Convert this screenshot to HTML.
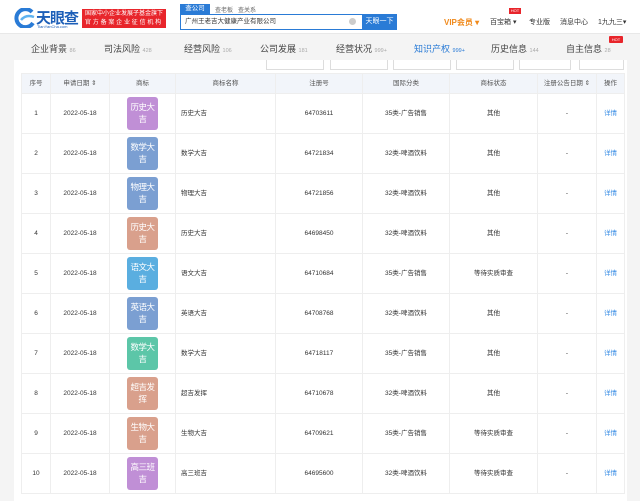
<!DOCTYPE html>
<html><head><meta charset="utf-8"><style>
*{margin:0;padding:0;box-sizing:border-box}
body{width:640px;height:501px;overflow:hidden;background:#f4f4f4;font-family:"Liberation Sans","Noto Sans CJK SC",sans-serif;font-size:7px;color:#333;position:relative}
.hdr{position:absolute;left:0;top:0;width:640px;height:34px;background:#fff;border-bottom:1px solid #e8e8e8}
.abs{position:absolute}
.nav{position:absolute;top:36px;left:0;width:640px;height:24px;font-size:9px;color:#444}
.nav span{position:absolute;top:6px;white-space:nowrap}
.nav i{font-style:normal;font-size:5.5px;color:#aaa}
.panel{position:absolute;left:14px;top:60px;width:613px;height:441px;background:#fff}
.dd{position:absolute;top:60px;height:10px;border:1px solid #ddd;border-top:none;background:#fff}
table{position:absolute;left:21px;top:73px;width:603px;border-collapse:collapse;table-layout:fixed}
td,th{border:1px solid #eee;text-align:center;font-weight:normal;font-size:6.5px;line-height:10px;color:#333;vertical-align:middle;white-space:nowrap;overflow:hidden;padding:0}
th{height:20px;background:#f2f5fa;color:#555}
td{height:40px}
.lg{display:block;margin:0 auto;width:31px;height:33px;border-radius:3px;color:#fff;font-size:8.5px;line-height:12px;padding-top:4px;letter-spacing:-0.5px;white-space:nowrap;overflow:hidden;text-align:center}
.l{text-align:left;padding-left:5px}
.bl{color:#3a8ee6}
</style></head><body>
<div class="hdr">
 <svg class="abs" style="left:14px;top:8px" width="22" height="20" viewBox="0 0 22 20"><path d="M18 4 A9 9 0 1 0 19 15" fill="none" stroke="#2a7bd6" stroke-width="4"/><path d="M7 12 Q12 6 20 9" fill="none" stroke="#5fb3f0" stroke-width="2.5"/></svg>
 <div class="abs" style="left:36px;top:7px;font-size:15px;font-weight:bold;color:#1d5fb8;letter-spacing:-1px">天眼查</div>
 <div class="abs" style="left:37px;top:24px;font-size:4px;color:#1d5fb8">TianYanCha.com</div>
 <div class="abs" style="left:82px;top:9px;width:84px;height:19px;background:#e8252b;color:#fff;font-size:6px;line-height:8.5px;text-align:center;padding-top:1px;white-space:nowrap;overflow:hidden">国家中小企业发展子基金旗下<br><span style="letter-spacing:1.8px">官方备案企业征信机构</span></div>
 <div class="abs" style="left:180px;top:4px;width:30px;height:10px;background:#2a7bd6;color:#fff;font-size:6.5px;text-align:center;line-height:10px">查公司</div>
 <div class="abs" style="left:215px;top:5px;font-size:6px;color:#666">查老板</div>
 <div class="abs" style="left:238px;top:5px;font-size:6px;color:#666">查关系</div>
 <div class="abs" style="left:180px;top:14px;width:183px;height:16px;border:1px solid #2a7bd6;background:#fff;font-size:6.5px;line-height:14px;padding-left:4px">广州王老吉大健康产业有限公司</div>
 <div class="abs" style="left:349px;top:18px;width:7px;height:7px;border-radius:50%;background:#ccc"></div>
 <div class="abs" style="left:362px;top:14px;width:35px;height:16px;background:#2a7bd6;color:#fff;font-size:7px;line-height:16px;text-align:center">天眼一下</div>
 <div class="abs" style="left:444px;top:17px;font-size:8px;font-weight:bold;color:#f08a1c">VIP会员 ▾</div>
 <div class="abs" style="left:490px;top:17px;font-size:7px;color:#333">百宝箱 ▾</div>
 <div class="abs" style="left:509px;top:8px;width:12px;height:6px;background:#e8252b;color:#fff;font-size:4px;text-align:center;line-height:6px">HOT</div>
 <div class="abs" style="left:529px;top:17px;font-size:7px">专业版</div>
 <div class="abs" style="left:560px;top:17px;font-size:7px">消息中心</div>
 <div class="abs" style="left:598px;top:17px;font-size:7px">1九九三▾</div>
</div>
<div class="nav">
 <span style="left:31px">企业背景 <i>86</i></span>
 <span style="left:104px">司法风险 <i>428</i></span>
 <span style="left:184px">经营风险 <i>106</i></span>
 <span style="left:260px">公司发展 <i>181</i></span>
 <span style="left:336px">经营状况 <i>999+</i></span>
 <span style="left:414px;color:#2a7bd6">知识产权 <i style="color:#2a7bd6">999+</i></span>
 <span style="left:491px">历史信息 <i>144</i></span>
 <span style="left:566px">自主信息 <i>28</i></span>
 <div class="abs" style="left:609px;top:0;width:14px;height:7px;background:#e8252b;color:#fff;font-size:4px;text-align:center;line-height:7px;border-radius:1px">HOT</div>
</div>
<div class="panel"></div>
<div class="dd" style="left:266px;width:58px"></div>
<div class="dd" style="left:330px;width:58px"></div>
<div class="dd" style="left:393px;width:58px"></div>
<div class="dd" style="left:456px;width:58px"></div>
<div class="dd" style="left:519px;width:52px"></div>
<div class="dd" style="left:579px;width:45px"></div>
<table>
<colgroup><col style="width:29px"><col style="width:59px"><col style="width:66px"><col style="width:100px"><col style="width:87px"><col style="width:87px"><col style="width:88px"><col style="width:59px"><col style="width:28px"></colgroup>
<tr><th>序号</th><th>申请日期 ⇕</th><th>商标</th><th>商标名称</th><th>注册号</th><th>国际分类</th><th>商标状态</th><th>注册公告日期 ⇕</th><th>操作</th></tr>
<tr><td>1</td><td>2022-05-18</td><td><span class="lg" style="background:#c08fd6">历史大<br>吉</span></td><td class="l">历史大吉</td><td>64703611</td><td>35类-广告销售</td><td>其他</td><td>-</td><td class="bl">详情</td></tr>
<tr><td>2</td><td>2022-05-18</td><td><span class="lg" style="background:#7b9fd2">数学大<br>吉</span></td><td class="l">数学大吉</td><td>64721834</td><td>32类-啤酒饮料</td><td>其他</td><td>-</td><td class="bl">详情</td></tr>
<tr><td>3</td><td>2022-05-18</td><td><span class="lg" style="background:#7b9fd2">物理大<br>吉</span></td><td class="l">物理大吉</td><td>64721856</td><td>32类-啤酒饮料</td><td>其他</td><td>-</td><td class="bl">详情</td></tr>
<tr><td>4</td><td>2022-05-18</td><td><span class="lg" style="background:#d9a08c">历史大<br>吉</span></td><td class="l">历史大吉</td><td>64698450</td><td>32类-啤酒饮料</td><td>其他</td><td>-</td><td class="bl">详情</td></tr>
<tr><td>5</td><td>2022-05-18</td><td><span class="lg" style="background:#5aaee0">语文大<br>吉</span></td><td class="l">语文大吉</td><td>64710684</td><td>35类-广告销售</td><td>等待实质审查</td><td>-</td><td class="bl">详情</td></tr>
<tr><td>6</td><td>2022-05-18</td><td><span class="lg" style="background:#7b9fd2">英语大<br>吉</span></td><td class="l">英语大吉</td><td>64708768</td><td>32类-啤酒饮料</td><td>其他</td><td>-</td><td class="bl">详情</td></tr>
<tr><td>7</td><td>2022-05-18</td><td><span class="lg" style="background:#5cc6a8">数学大<br>吉</span></td><td class="l">数学大吉</td><td>64718117</td><td>35类-广告销售</td><td>其他</td><td>-</td><td class="bl">详情</td></tr>
<tr><td>8</td><td>2022-05-18</td><td><span class="lg" style="background:#d9a08c">超吉发<br>挥</span></td><td class="l">超吉发挥</td><td>64710678</td><td>32类-啤酒饮料</td><td>其他</td><td>-</td><td class="bl">详情</td></tr>
<tr><td>9</td><td>2022-05-18</td><td><span class="lg" style="background:#d9a08c">生物大<br>吉</span></td><td class="l">生物大吉</td><td>64709621</td><td>35类-广告销售</td><td>等待实质审查</td><td>-</td><td class="bl">详情</td></tr>
<tr><td>10</td><td>2022-05-18</td><td><span class="lg" style="background:#c08fd6">高三班<br>吉</span></td><td class="l">高三班吉</td><td>64695600</td><td>32类-啤酒饮料</td><td>等待实质审查</td><td>-</td><td class="bl">详情</td></tr>
</table>
</body></html>
